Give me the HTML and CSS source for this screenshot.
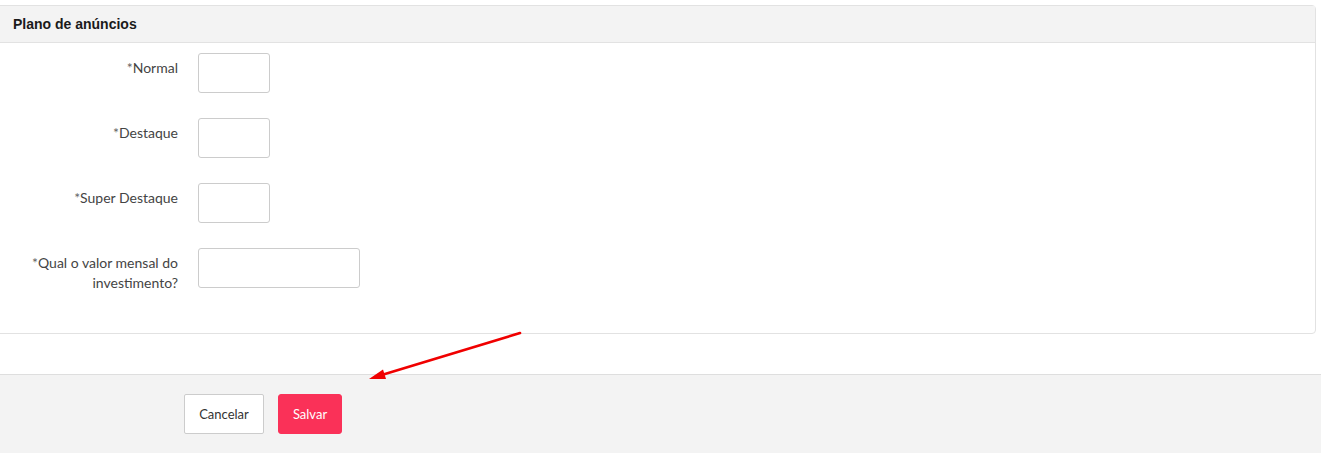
FILE: index.html
```html
<!DOCTYPE html>
<html lang="pt">
<head>
  <meta charset="UTF-8" />
  <title>Plano de anúncios</title>
  <link rel="stylesheet" href="styles.css">
</head>
<body>

<!-- Painel do plano -->
<div class="panel">
  <div class="panel-heading">Plano de anúncios</div>
  <div class="panel-body">
    <div class="form-row">
      <label class="form-label"><span class="req">*</span>Normal</label>
      <input type="text" class="field field-sm" />
    </div>
    <div class="form-row">
      <label class="form-label"><span class="req">*</span>Destaque</label>
      <input type="text" class="field field-sm" />
    </div>
    <div class="form-row">
      <label class="form-label"><span class="req">*</span>Super Destaque</label>
      <input type="text" class="field field-sm" />
    </div>
    <div class="form-row">
      <label class="form-label"><span class="req">*</span>Qual o valor mensal do investimento?</label>
      <input type="text" class="field field-md" />
    </div>
  </div>
</div>

<!-- Rodapé -->
<div class="form-footer">
  <button class="btn btn-default">Cancelar</button>
  <button class="btn btn-primary">Salvar</button>
</div>

<svg class="arrow" width="1321" height="459" viewBox="0 0 1321 459">
  <line x1="520" y1="333" x2="380" y2="375.5" stroke="#f00000" stroke-width="2.6" stroke-linecap="round" />
  <polygon points="369,379 383,369.5 386,379" fill="#f00000" />
</svg>

</body>
</html>
```

FILE: styles.css
```css
* { box-sizing: border-box; }
body {
  font-family: Lato, "Open Sans", sans-serif;
  font-size: 14px;
  color: #444;
  background: #fff;
  margin: 0;
  position: relative;
  height: 459px;
}
.panel {
  margin: 5px 5px 0 -5px;
  border: 1px solid #e2e2e2;
  border-radius: 0 4px 4px 0;
  background: #fff;
}
.panel-heading {
  background: #f3f3f3;
  border-bottom: 1px solid #e2e2e2;
  height: 37px;
  padding: 1px 0 0 17px;
  line-height: 35px;
  font-family: "Liberation Sans", Arial, sans-serif;
  font-weight: bold;
  font-size: 14px;
  color: #1a1a1a;
}
.panel-body {
  padding: 10px 0 40px 0;
  display: flex;
  flex-direction: column;
  gap: 25px;
}
.form-row {
  display: flex;
  align-items: flex-start;
}
.form-label {
  width: 182px;
  padding: 5px 0 0 19px;
  line-height: 20px;
  text-align: right;
  color: #444;
}
.req { color: #666; }
.field {
  margin-left: 20px;
  height: 40px;
  border: 1px solid #ccc;
  border-radius: 3px;
  background: #fff;
  font: inherit;
  padding: 0 8px;
}
.field-sm { width: 72px; }
.field-md { width: 162px; }
.form-footer {
  margin-top: 40px;
  background: #f3f3f3;
  border-top: 1px solid #dedede;
  height: 79px;
  padding: 19px 0 0 184px;
  display: flex;
  gap: 14px;
}
.btn {
  height: 40px;
  font-family: Lato, "Open Sans", sans-serif;
  font-size: 13px;
  border-radius: 2px;
  cursor: pointer;
}
.btn-default {
  width: 80px;
  background: #fff;
  border: 1px solid #ccc;
  color: #333;
}
.btn-primary {
  width: 64px;
  background: #fa3158;
  border: 1px solid #fa3158;
  border-radius: 3px;
  color: #fff;
}
.arrow {
  position: absolute;
  left: 0;
  top: 0;
  pointer-events: none;
}
```
